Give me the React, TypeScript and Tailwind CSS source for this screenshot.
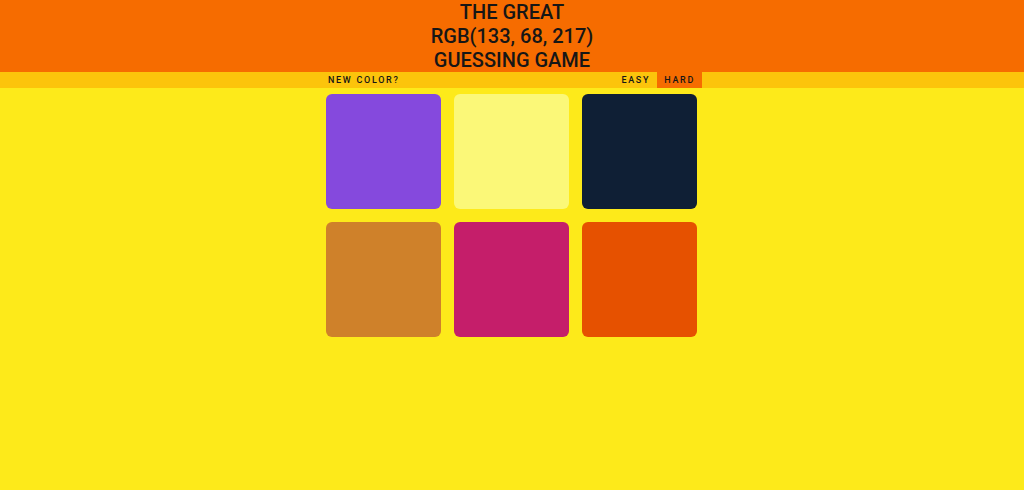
const squares = [
  '#8549dd',
  '#fbf878',
  '#0f1f35',
  '#cf812a',
  '#c51e6a',
  '#e65100',
];

export default function App() {
  return (
    <div className="min-h-screen w-full bg-[#fdea1a] font-['Roboto',sans-serif] text-[#161616]">
      <h1 className="bg-[#f66c00] text-center text-[20px] font-medium uppercase leading-[24px]">
        The Great
        <br />
        RGB(133, 68, 217)
        <br />
        Guessing Game
      </h1>
      <div className="h-4 bg-[#fcc40b]">
        <div className="mx-auto flex h-4 w-[384px] items-center justify-between pr-[2px] text-[9px] font-medium uppercase tracking-[1.7px]">
          <button className="h-4 px-2 uppercase leading-4">New Color?</button>
          <div className="flex h-4">
            <button className="h-4 px-[7px] uppercase leading-4">Easy</button>
            <button className="h-4 bg-[#f66c00] px-[7px] uppercase leading-4">Hard</button>
          </div>
        </div>
      </div>
      <div className="mx-auto flex w-[384px] flex-wrap px-[6px] pt-[6px]">
        {squares.map((c, i) => (
          <div
            key={i}
            className={`mb-[12.8px] h-[115px] w-[115px] rounded-md ${i % 3 === 2 ? '' : 'mr-[12.8px]'}`}
            style={{ backgroundColor: c }}
          />
        ))}
      </div>
    </div>
  );
}
